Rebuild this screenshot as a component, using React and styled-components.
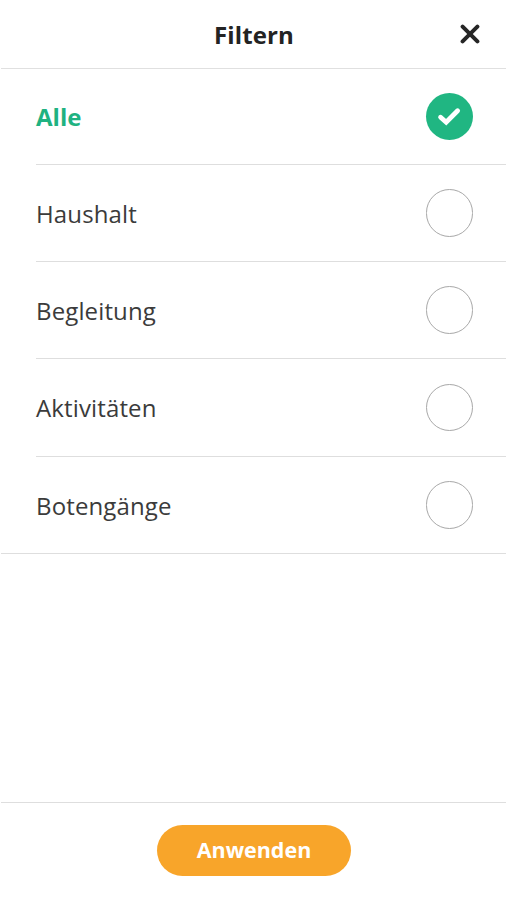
import React, { useState } from "react";
import styled, { createGlobalStyle } from "styled-components";

const GlobalStyle = createGlobalStyle`
  *, *::before, *::after { box-sizing: border-box; }
  body { margin: 0; background: #fff; }
  button { font: inherit; color: inherit; border: 0; padding: 0; background: none; cursor: pointer; }
`;

const Screen = styled.main`
  display: flex;
  flex-direction: column;
  width: 100%;
  height: 100vh;
  padding-left: 1px;
  background: #fff;
  color: #3b3b3b;
  font-family: "Open Sans", "Noto Sans", sans-serif;
`;

const Header = styled.header`
  display: grid;
  grid-template-columns: 73px 1fr 72px;
  align-items: center;
  height: 69px;
  border-bottom: 1px solid #e0e0e0;
`;

const Title = styled.h1`
  grid-column: 2;
  margin: 1px 0 0;
  font-size: 24px;
  line-height: 32px;
  font-weight: 700;
  letter-spacing: 0.1px;
  text-align: center;
  color: #232323;
`;

const CloseButton = styled.button`
  display: flex;
  justify-content: center;
  svg { display: block; }
`;

const OptionList = styled.div`
  padding-left: 35px;
  border-bottom: 1px solid #dedede;
`;

const Option = styled.button`
  display: flex;
  align-items: center;
  justify-content: space-between;
  width: 100%;
  height: 97px;
  padding-right: 33px;
  font-size: 24px;
  letter-spacing: ${(p) => (p.$selected ? "0" : "0.13px")};
  font-weight: ${(p) => (p.$selected ? 700 : 400)};
  color: ${(p) => (p.$selected ? "#1fb281" : "#3b3b3b")};
  &:first-of-type { height: 95px; }
  &:nth-of-type(4) { height: 98px; }
  & + & { border-top: 1px solid #dedede; }
`;

const Radio = styled.span`
  display: flex;
  align-items: center;
  justify-content: center;
  width: 47.5px;
  height: 47.5px;
  border-radius: 50%;
  border: ${(p) => (p.$selected ? "0" : "1px solid #a8a8a8")};
  background: ${(p) => (p.$selected ? "#20b682" : "#fff")};
`;

const Footer = styled.footer`
  display: flex;
  justify-content: center;
  align-items: flex-start;
  height: 98px;
  margin-top: auto;
  padding: 22px 0 0 1px;
  border-top: 1px solid #dedede;
`;

const ApplyButton = styled.button`
  width: 194px;
  height: 51px;
  padding-bottom: 2px;
  border-radius: 26px;
  background: #f8a52a;
  color: #fff;
  font-size: 21.5px;
  font-weight: 700;
`;

const options = ["Alle", "Haushalt", "Begleitung", "Aktivitäten", "Botengänge"];

export default function App() {
  const [active, setActive] = useState("Alle");
  return (
    <Screen>
      <GlobalStyle />
      <Header>
        <Title>Filtern</Title>
        <CloseButton aria-label="Schließen">
          <svg width="20" height="20" viewBox="0 0 20 20" fill="none" stroke="#262626" strokeWidth="4" strokeLinecap="round">
            <path d="M2.6 2.6 17.4 17.4M17.4 2.6 2.6 17.4" />
          </svg>
        </CloseButton>
      </Header>
      <OptionList>
        {options.map((name) => (
          <Option key={name} $selected={name === active} onClick={() => setActive(name)}>
            {name}
            <Radio $selected={name === active}>
              {name === active && (
                <svg width="24" height="20" viewBox="0 0 24 20" fill="none" stroke="#fff" strokeWidth="4.8" strokeLinecap="round" strokeLinejoin="miter">
                  <path d="M3.6 10.2 9.2 15.2 20.6 3.8" />
                </svg>
              )}
            </Radio>
          </Option>
        ))}
      </OptionList>
      <Footer>
        <ApplyButton>Anwenden</ApplyButton>
      </Footer>
    </Screen>
  );
}
